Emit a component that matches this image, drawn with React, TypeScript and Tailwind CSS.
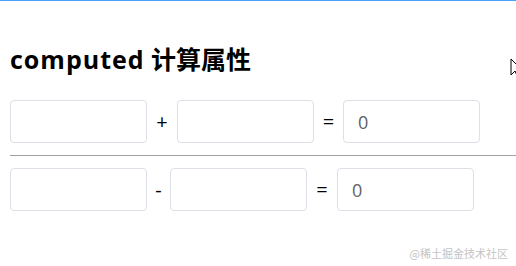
const inputCls =
  "h-[43px] w-[137px] shrink-0 rounded-[4px] border border-[#dcdfe6] bg-white pl-[14px] text-[18px] text-[#606266] outline-none";

function Row({ op, opW, eqW }: { op: string; opW: string; eqW: string }) {
  return (
    <div className="flex items-center text-[20px] text-black">
      <input className={inputCls} />
      <span className={`${opW} text-center`}>{op}</span>
      <input className={inputCls} />
      <span className={`${eqW} text-center`}>=</span>
      <input className={inputCls} defaultValue="0" readOnly />
    </div>
  );
}

export default function App() {
  return (
    <div
      className="relative h-[266px] w-full overflow-hidden border-t border-[#4aa3ff] bg-white"
      style={{ fontFamily: '"Open Sans", "Noto Sans CJK SC", sans-serif' }}
    >
      <div className="pl-[10px]">
        <h2 className="mt-[42px] text-[25px] font-bold leading-[32px] text-black">
          <span className="tracking-[1px]">computed</span> 计算属性
        </h2>
        <div className="mt-[25px]">
          <Row op="+" opW="w-[30px]" eqW="w-[29px]" />
        </div>
        <hr className="my-[12px] border-t border-[#a0a0a0]" />
        <Row op="-" opW="w-[23px]" eqW="w-[30px]" />
      </div>

      <svg
        className="absolute left-[510px] top-[57px]"
        width="13"
        height="21"
        viewBox="0 0 13 21"
      >
        <path
          d="M1 1 L1 17 L5 13 L8 20 L10 19 L7 12 L12 12 Z"
          fill="white"
          stroke="black"
          strokeWidth="1"
        />
      </svg>

      <span
        className="absolute bottom-[5px] right-[8px] text-[11px] text-[#c4c4c4]"
        style={{ fontFamily: '"Noto Sans CJK SC", sans-serif' }}
      >
        @稀土掘金技术社区
      </span>
    </div>
  );
}
